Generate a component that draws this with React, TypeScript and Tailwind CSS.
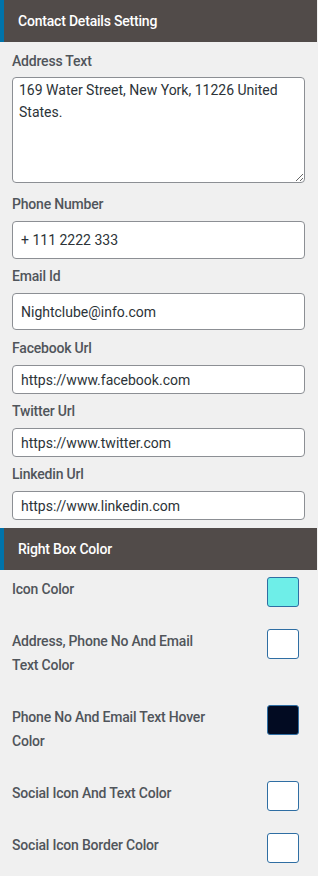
import React from "react";

interface FieldProps {
  label: string;
  value: string;
  heightClass: string;
}

function SectionHeader({ title }: { title: string }) {
  return (
    <div className="flex h-[42px] w-[317px] items-center border-l-4 border-[#0073aa] bg-[#514b49] pl-[14px]">
      <span className="text-[14px] font-medium tracking-[-0.2px] text-white">
        {title}
      </span>
    </div>
  );
}

function TextField({ label, value, heightClass }: FieldProps) {
  return (
    <div className="pt-[7px]">
      <div className="mb-[7px] text-[14px] leading-5 font-medium tracking-[-0.2px] text-[#50555b]">
        {label}
      </div>
      <input
        readOnly
        defaultValue={value}
        className={`${heightClass} block w-[293px] rounded-[4px] border border-[#8c8f94] bg-white px-2 text-[14px] text-[#2c3338] outline-none`}
      />
    </div>
  );
}

const colorRows = [
  { label: "Icon Color", color: "bg-[#6eeee8]", rowClass: "h-[52px]" },
  {
    label: "Address, Phone No And Email Text Color",
    color: "bg-white",
    rowClass: "h-[76px]",
  },
  {
    label: "Phone No And Email Text Hover Color",
    color: "bg-[#020b22]",
    rowClass: "h-[76px]",
  },
  { label: "Social Icon And Text Color", color: "bg-white", rowClass: "h-[52px]" },
  { label: "Social Icon Border Color", color: "bg-white", rowClass: "h-[44px]" },
];

export default function App() {
  return (
    <div className="min-h-[876px] w-[318px] bg-[#f0f0f0] font-['Roboto',sans-serif]">
      <SectionHeader title="Contact Details Setting" />

      <div className="px-3 pb-[8px]">
        {/* Address */}
        <div className="pt-[9px]">
          <div className="mb-[6px] text-[14px] leading-5 font-medium tracking-[-0.2px] text-[#50555b]">
            Address Text
          </div>
          <textarea
            readOnly
            defaultValue="169 Water Street, New York, 11226 United States."
            className="block h-[106px] w-[293px] rounded-[4px] border border-[#8c8f94] bg-white px-[6px] py-[1px] text-[14px] leading-[22px] text-[#2c3338] outline-none"
          />
        </div>

        <div className="pt-[4px]">
          <TextField label="Phone Number" value="+ 111 2222 333" heightClass="h-[38px]" />
        </div>
        <TextField label="Email Id" value="Nightclube@info.com" heightClass="h-[37px]" />
        <div className="pt-[1px]">
          <TextField label="Facebook Url" value="https://www.facebook.com" heightClass="h-[29px]" />
        </div>
        <TextField label="Twitter Url" value="https://www.twitter.com" heightClass="h-[29px]" />
        <TextField label="Linkedin Url" value="https://www.linkedin.com" heightClass="h-[29px]" />
      </div>

      <SectionHeader title="Right Box Color" />

      <div className="px-3 pt-[7px]">
        {colorRows.map((row) => (
          <div key={row.label} className={`${row.rowClass} flex items-start justify-between`}>
            <div className="w-[210px] text-[14px] leading-6 font-medium tracking-[-0.2px] text-[#50555b]">
              {row.label}
            </div>
            <div
              className={`${row.color} mr-[7px] h-[30px] w-[32px] rounded-[3px] border-[1.5px] border-[#2f6ea3]`}
            />
          </div>
        ))}
      </div>
    </div>
  );
}
